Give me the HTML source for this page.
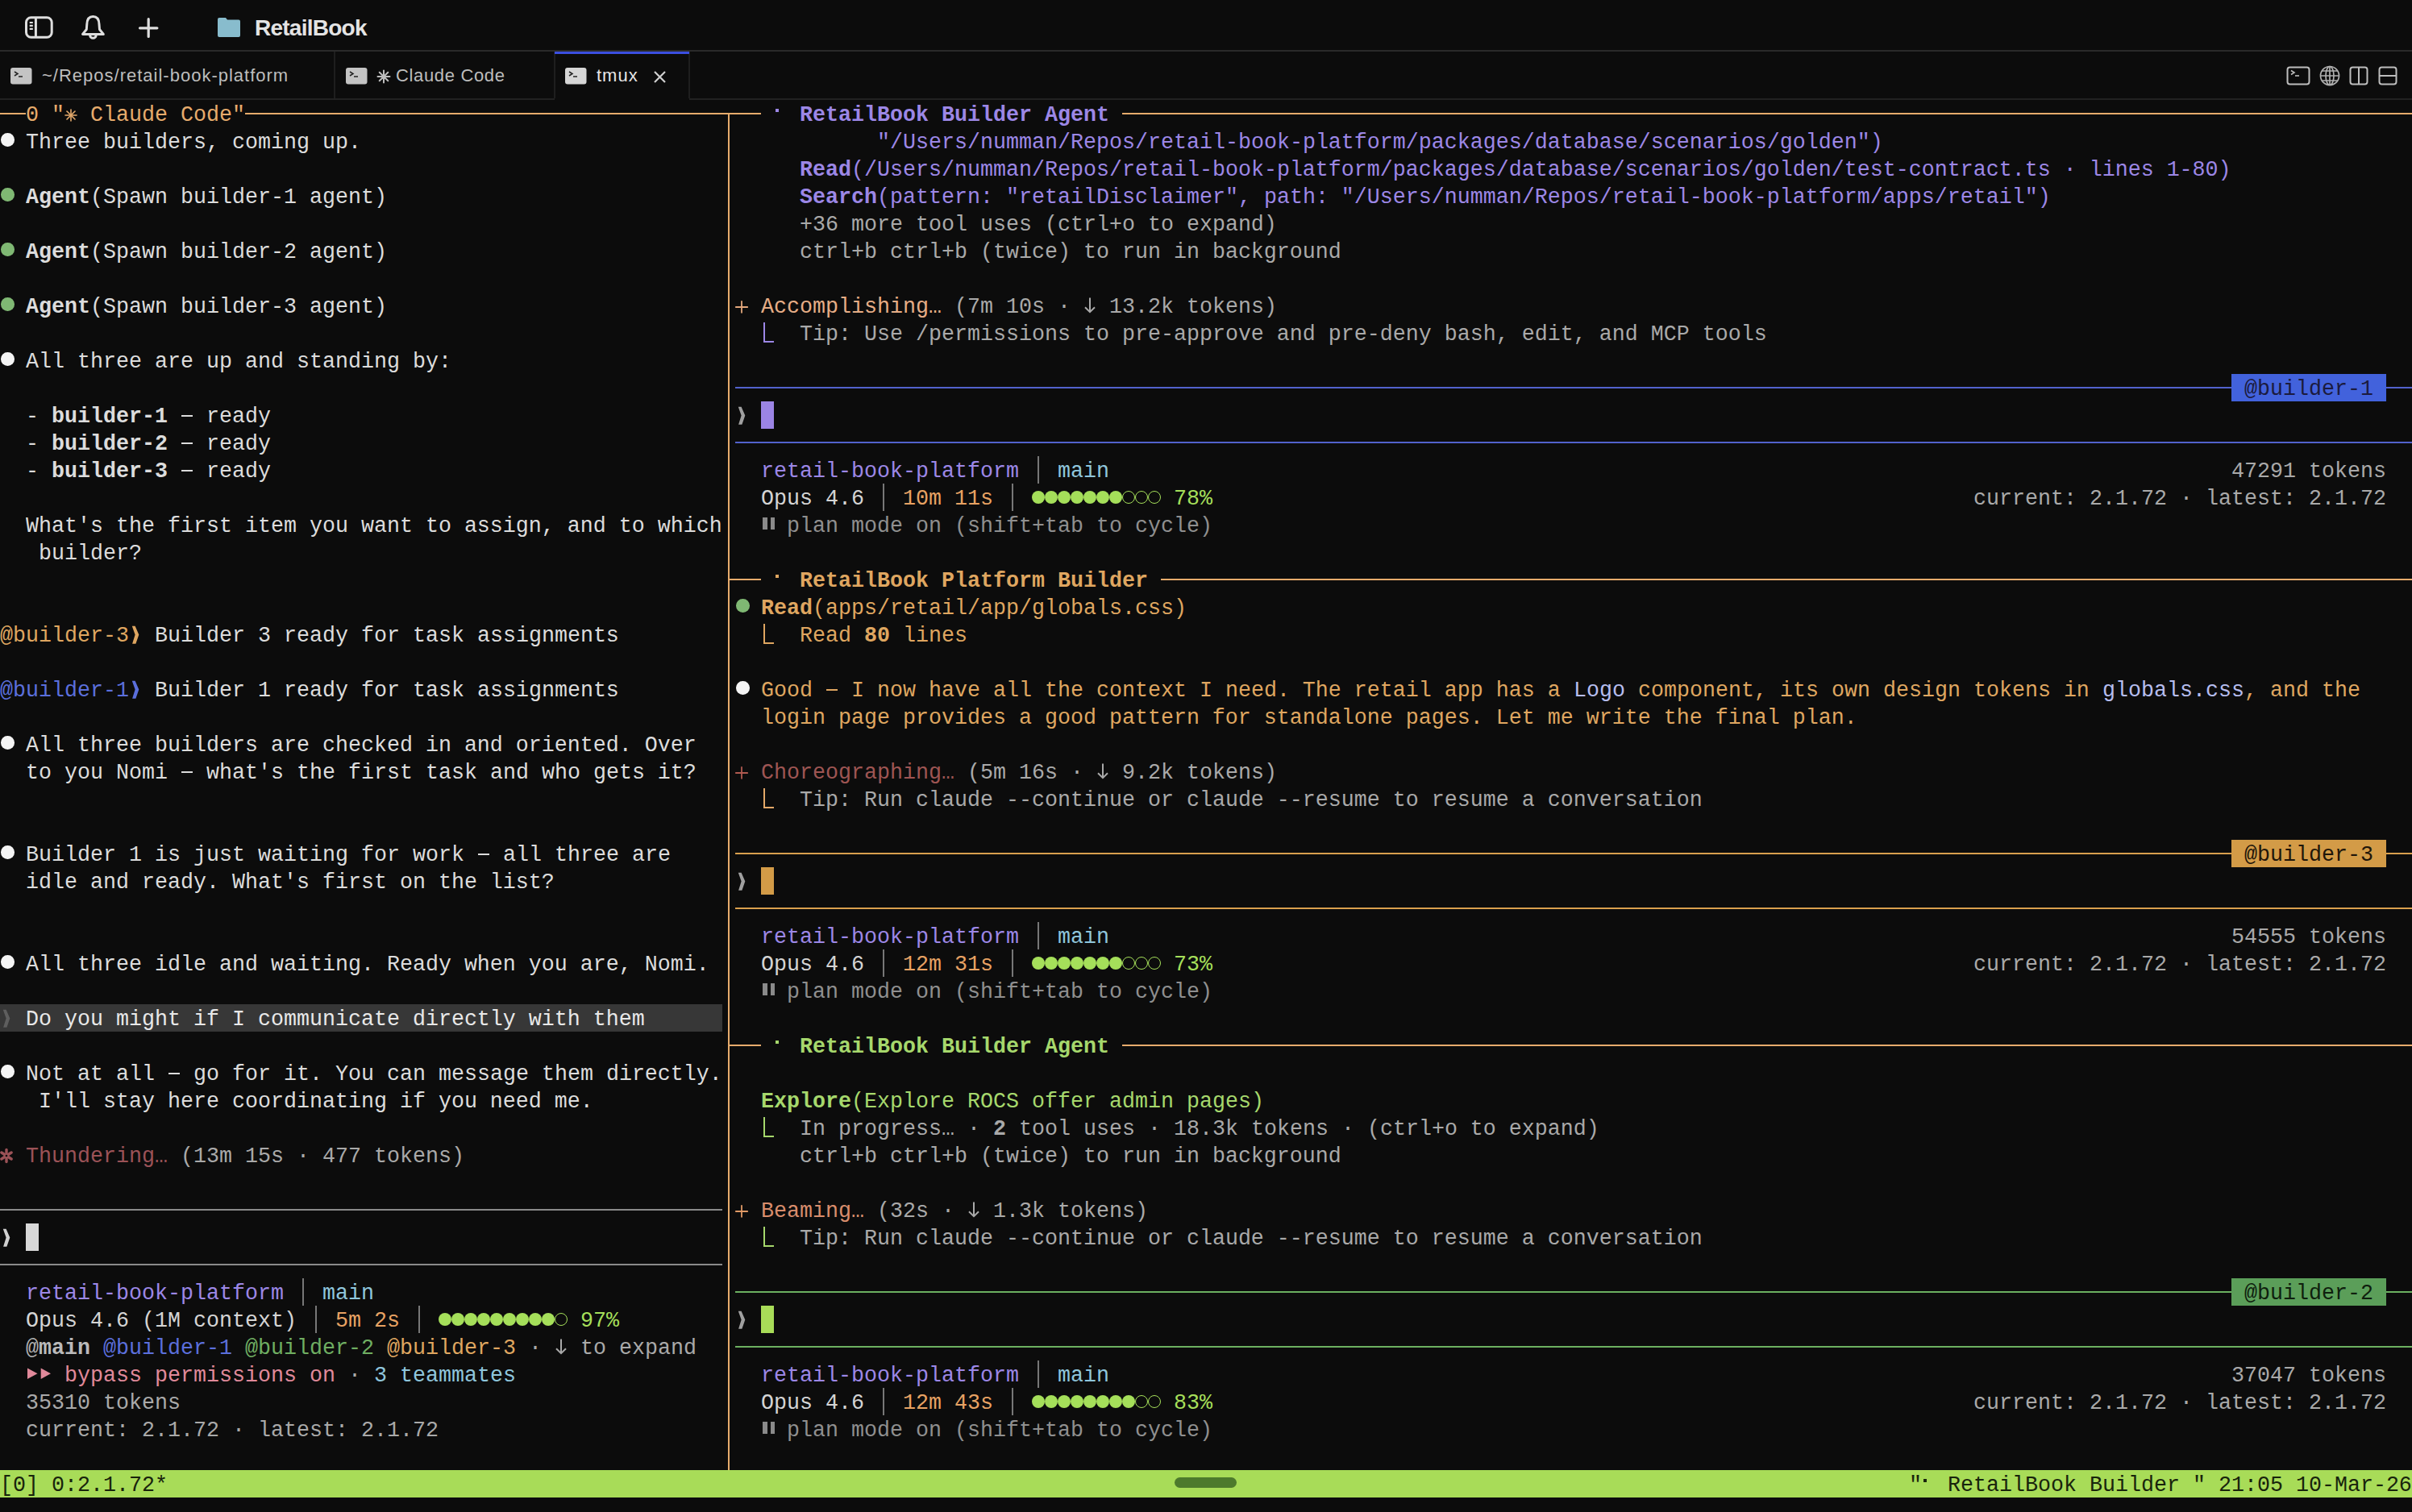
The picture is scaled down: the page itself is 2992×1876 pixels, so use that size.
<!DOCTYPE html>
<html><head><meta charset="utf-8"><style>
html,body{margin:0;padding:0;background:#0c0c0c;width:2992px;height:1876px;overflow:hidden;position:relative}
.t{position:absolute;font-family:"Liberation Mono",monospace;font-size:26.66px;line-height:34px;height:34px;white-space:pre;margin-top:2px;transform-origin:0 24px;transform:scaleY(1.07)}
.hl{position:absolute;height:2px}
.blk{position:absolute}
.ic{position:absolute;overflow:visible}
.bul{position:absolute;width:16.6px;height:16.6px;border-radius:50%}
.dot{position:absolute;width:16px;height:16px;border-radius:50%}
.hook{position:absolute;width:11px;height:23px;border-left:2px solid;border-bottom:2px solid}
.sans{position:absolute;font-family:"Liberation Sans",sans-serif;white-space:pre;line-height:1}
.b{font-weight:bold}
</style></head><body>

<div class="blk" style="left:0;top:62px;width:2992px;height:2px;background:#2a2a2a"></div>
<div class="blk" style="left:0;top:122px;width:688px;height:2px;background:#222"></div>
<div class="blk" style="left:855px;top:122px;width:2137px;height:2px;background:#222"></div>
<div class="blk" style="left:414px;top:64px;width:2px;height:58px;background:#1e1e1e"></div>
<div class="blk" style="left:687px;top:64px;width:2px;height:58px;background:#1e1e1e"></div>
<div class="blk" style="left:854px;top:64px;width:2px;height:58px;background:#1e1e1e"></div>
<div class="blk" style="left:688px;top:64px;width:167px;height:3px;background:#3b4fe0"></div>

<svg class="ic" style="left:28px;top:18px" width="40" height="32"><rect x="4.5" y="3.7" width="31.7" height="24.6" rx="6" fill="none" stroke="#dedede" stroke-width="3"/><path d="M16.4 3.7 V28.3" stroke="#dedede" stroke-width="3"/><path d="M8.7 10 H12.8 M8.7 13.9 H12.8 M8.7 17.8 H12.8" stroke="#dedede" stroke-width="2.2"/></svg>
<svg class="ic" style="left:98px;top:17px" width="36" height="36"><path d="M17.4 3.5 C12.5 3.5 10 7.5 9.8 13 L9.3 19.5 L4.5 25.4 H30.3 L25.5 19.5 L25 13 C24.8 7.5 22.3 3.5 17.4 3.5 Z" fill="none" stroke="#dedede" stroke-width="3" stroke-linejoin="round"/><path d="M13.6 26.5 A3.8 3.8 0 0 0 21.2 26.5" fill="none" stroke="#dedede" stroke-width="3"/></svg>
<svg class="ic" style="left:170px;top:20px" width="30" height="30"><path d="M14.2 3.7 V25.5 M3.5 14.8 H24.9" stroke="#dedede" stroke-width="3.2" stroke-linecap="round"/></svg>
<svg class="ic" style="left:269px;top:21px" width="30" height="26"><path d="M1 3 Q1 1 3 1 H11 L13 3.5 H27 Q29 3.5 29 5.5 V23 Q29 25 27 25 H3 Q1 25 1 23 Z" fill="#88bccd"/></svg>
<div class="sans b" style="left:316px;top:20.5px;font-size:28px;letter-spacing:-0.75px;color:#e4e4e4">RetailBook</div>

<svg class="ic" style="left:13px;top:84px" width="27" height="21"><rect x="0" y="0" width="26.5" height="20.5" rx="3" fill="#c4c4c4"/><path d="M5 5 L9 7.5 L5 10" fill="none" stroke="#222" stroke-width="1.5"/><path d="M10 11 H15" stroke="#222" stroke-width="1.5"/></svg>
<div class="sans" style="left:52px;top:83px;font-size:22px;letter-spacing:1px;color:#bdbdbd">~/Repos/retail-book-platform</div>
<svg class="ic" style="left:429px;top:84px" width="27" height="21"><rect x="0" y="0" width="26.5" height="20.5" rx="3" fill="#c4c4c4"/><path d="M5 5 L9 7.5 L5 10" fill="none" stroke="#222" stroke-width="1.5"/><path d="M10 11 H15" stroke="#222" stroke-width="1.5"/></svg>
<svg class="ic" style="left:467px;top:86px" width="18" height="18"><g stroke="#bdbdbd" stroke-width="2" stroke-linecap="round"><path d="M9 1.5 V16.5 M1.5 9 H16.5 M3.7 3.7 L14.3 14.3 M14.3 3.7 L3.7 14.3"/></g></svg>
<div class="sans" style="left:491px;top:83px;font-size:22px;letter-spacing:0.65px;color:#bdbdbd">Claude Code</div>
<svg class="ic" style="left:701px;top:84px" width="27" height="21"><rect x="0" y="0" width="26.5" height="20.5" rx="3" fill="#d6d6d6"/><path d="M5 5 L9 7.5 L5 10" fill="none" stroke="#222" stroke-width="1.5"/><path d="M10 11 H15" stroke="#222" stroke-width="1.5"/></svg>
<div class="sans" style="left:740px;top:83px;font-size:22px;letter-spacing:1px;color:#e6e6e6">tmux</div>
<svg class="ic" style="left:810px;top:87px" width="17" height="17"><path d="M2 2 L15 15 M15 2 L2 15" stroke="#d0d0d0" stroke-width="2.2"/></svg>

<svg class="ic" style="left:2836px;top:82px" width="30" height="24"><rect x="1.5" y="1.5" width="27" height="21" rx="3" fill="none" stroke="#bdbdbd" stroke-width="2"/><path d="M6 5.5 L10 8 L6 10.5" fill="none" stroke="#bdbdbd" stroke-width="1.6"/><path d="M11 12 H16" stroke="#bdbdbd" stroke-width="1.6"/></svg>
<svg class="ic" style="left:2877px;top:81px" width="26" height="26"><g fill="none" stroke="#b0b0b0" stroke-width="1.7"><circle cx="13" cy="13" r="11.5"/><ellipse cx="13" cy="13" rx="5" ry="11.5"/><path d="M13 1.5 V24.5 M1.5 13 H24.5 M3.5 7 H22.5 M3.5 19 H22.5"/></g></svg>
<svg class="ic" style="left:2914px;top:82px" width="24" height="24"><rect x="1.5" y="1.5" width="21" height="21" rx="3" fill="none" stroke="#bdbdbd" stroke-width="2"/><path d="M12 1.5 V22.5" stroke="#bdbdbd" stroke-width="2"/></svg>
<svg class="ic" style="left:2950px;top:82px" width="24" height="24"><rect x="1.5" y="1.5" width="21" height="21" rx="3" fill="none" stroke="#bdbdbd" stroke-width="2"/><path d="M1.5 12 H22.5" stroke="#bdbdbd" stroke-width="2"/></svg>

<div class="hl" style="left:0px;top:140px;width:32px;background:#e6ab6c"></div>
<span class="t" style="left:32px;top:124px;color:#e6ab6c;">0 "</span>
<svg class="ic" style="left:80px;top:124px" width="16" height="34"><g stroke="#e6ab6c" stroke-width="1.6" stroke-linecap="round"><path d="M8 12 V26"/><path d="M1 19 H15"/><path d="M3 14 L13 24"/><path d="M13 14 L3 24"/></g></svg>
<span class="t" style="left:96px;top:124px;color:#e6ab6c;"> Claude Code"</span>
<div class="hl" style="left:304px;top:140px;width:640px;background:#e6ab6c"></div>
<div class="blk" style="left:903px;top:140px;width:2px;height:1684px;background:#e6ab6c"></div>
<div class="bul" style="left:1.3px;top:165.3px;background:#f4f4f4"></div>
<span class="t" style="left:32px;top:158px;color:#dcdcdc;">Three builders, coming up.</span>
<div class="bul" style="left:1.3px;top:233.3px;background:#7fb873"></div>
<span class="t" style="left:32px;top:226px;color:#dcdcdc;font-weight:bold;">Agent</span>
<span class="t" style="left:112px;top:226px;color:#dcdcdc;">(Spawn builder-1 agent)</span>
<div class="bul" style="left:1.3px;top:301.3px;background:#7fb873"></div>
<span class="t" style="left:32px;top:294px;color:#dcdcdc;font-weight:bold;">Agent</span>
<span class="t" style="left:112px;top:294px;color:#dcdcdc;">(Spawn builder-2 agent)</span>
<div class="bul" style="left:1.3px;top:369.3px;background:#7fb873"></div>
<span class="t" style="left:32px;top:362px;color:#dcdcdc;font-weight:bold;">Agent</span>
<span class="t" style="left:112px;top:362px;color:#dcdcdc;">(Spawn builder-3 agent)</span>
<div class="bul" style="left:1.3px;top:437.3px;background:#f4f4f4"></div>
<span class="t" style="left:32px;top:430px;color:#dcdcdc;">All three are up and standing by:</span>
<span class="t" style="left:32px;top:498px;color:#dcdcdc;">-</span>
<span class="t" style="left:64px;top:498px;color:#dcdcdc;font-weight:bold;">builder-1</span>
<div class="blk" style="left:225px;top:515px;width:14px;height:2px;background:#dcdcdc"></div>
<span class="t" style="left:256px;top:498px;color:#dcdcdc;">ready</span>
<span class="t" style="left:32px;top:532px;color:#dcdcdc;">-</span>
<span class="t" style="left:64px;top:532px;color:#dcdcdc;font-weight:bold;">builder-2</span>
<div class="blk" style="left:225px;top:549px;width:14px;height:2px;background:#dcdcdc"></div>
<span class="t" style="left:256px;top:532px;color:#dcdcdc;">ready</span>
<span class="t" style="left:32px;top:566px;color:#dcdcdc;">-</span>
<span class="t" style="left:64px;top:566px;color:#dcdcdc;font-weight:bold;">builder-3</span>
<div class="blk" style="left:225px;top:583px;width:14px;height:2px;background:#dcdcdc"></div>
<span class="t" style="left:256px;top:566px;color:#dcdcdc;">ready</span>
<span class="t" style="left:32px;top:634px;color:#dcdcdc;">What's the first item you want to assign, and to which</span>
<span class="t" style="left:48px;top:668px;color:#dcdcdc;">builder?</span>
<span class="t" style="left:0px;top:770px;color:#dfa660;">@builder-3</span>
<svg class="ic" style="left:160px;top:770px" width="16" height="34"><path d="M3.8 6.8 L7.6 6.8 L12.3 17.6 L8.4 28.8 L4.1 28.8 L7.6 17.6 Z" fill="#dfa660"/></svg>
<span class="t" style="left:192px;top:770px;color:#dcdcdc;">Builder 3 ready for task assignments</span>
<span class="t" style="left:0px;top:838px;color:#5b6fdc;">@builder-1</span>
<svg class="ic" style="left:160px;top:838px" width="16" height="34"><path d="M3.8 6.8 L7.6 6.8 L12.3 17.6 L8.4 28.8 L4.1 28.8 L7.6 17.6 Z" fill="#5b6fdc"/></svg>
<span class="t" style="left:192px;top:838px;color:#dcdcdc;">Builder 1 ready for task assignments</span>
<div class="bul" style="left:1.3px;top:913.3px;background:#f4f4f4"></div>
<span class="t" style="left:32px;top:906px;color:#dcdcdc;">All three builders are checked in and oriented. Over</span>
<span class="t" style="left:32px;top:940px;color:#dcdcdc;">to you Nomi </span>
<div class="blk" style="left:225px;top:957px;width:14px;height:2px;background:#dcdcdc"></div>
<span class="t" style="left:256px;top:940px;color:#dcdcdc;">what's the first task and who gets it?</span>
<div class="bul" style="left:1.3px;top:1049.3px;background:#f4f4f4"></div>
<span class="t" style="left:32px;top:1042px;color:#dcdcdc;">Builder 1 is just waiting for work </span>
<div class="blk" style="left:593px;top:1059px;width:14px;height:2px;background:#dcdcdc"></div>
<span class="t" style="left:624px;top:1042px;color:#dcdcdc;">all three are</span>
<span class="t" style="left:32px;top:1076px;color:#dcdcdc;">idle and ready. What's first on the list?</span>
<div class="bul" style="left:1.3px;top:1185.3px;background:#f4f4f4"></div>
<span class="t" style="left:32px;top:1178px;color:#dcdcdc;">All three idle and waiting. Ready when you are, Nomi.</span>
<div class="blk" style="left:0px;top:1246px;width:896px;height:34px;background:#373737"></div>
<svg class="ic" style="left:0px;top:1246px" width="16" height="34"><path d="M3.8 6.8 L7.6 6.8 L12.3 17.6 L8.4 28.8 L4.1 28.8 L7.6 17.6 Z" fill="#5e5e5e"/></svg>
<span class="t" style="left:32px;top:1246px;color:#e8e8e8;">Do you might if I communicate directly with them</span>
<div class="bul" style="left:1.3px;top:1321.3px;background:#f4f4f4"></div>
<span class="t" style="left:32px;top:1314px;color:#dcdcdc;">Not at all </span>
<div class="blk" style="left:209px;top:1331px;width:14px;height:2px;background:#dcdcdc"></div>
<span class="t" style="left:240px;top:1314px;color:#dcdcdc;">go for it. You can message them directly.</span>
<span class="t" style="left:48px;top:1348px;color:#dcdcdc;">I'll stay here coordinating if you need me.</span>
<svg class="ic" style="left:0px;top:1416px" width="16" height="34"><g stroke="#9b5257" stroke-width="3.4" stroke-linecap="round"><path d="M8 10.5 V25.5"/><path d="M1.9 14 L14.1 22"/><path d="M14.1 14 L1.9 22"/></g><circle cx="8" cy="18" r="1.3" fill="#0c0c0c"/></svg>
<span class="t" style="left:32px;top:1416px;color:#9b5257;">Thundering…</span>
<span class="t" style="left:224px;top:1416px;color:#a9a9a9;">(13m 15s · 477 tokens)</span>
<div class="hl" style="left:0px;top:1500px;width:896px;background:#8a8a8a"></div>
<svg class="ic" style="left:0px;top:1518px" width="16" height="34"><path d="M3.8 6.8 L7.6 6.8 L12.3 17.6 L8.4 28.8 L4.1 28.8 L7.6 17.6 Z" fill="#d0d0d0"/></svg>
<div class="blk" style="left:32px;top:1518px;width:16px;height:34px;background:#d8d8d8"></div>
<div class="hl" style="left:0px;top:1568px;width:896px;background:#8a8a8a"></div>
<span class="t" style="left:32px;top:1586px;color:#9c87e6;">retail-book-platform</span>
<div class="blk" style="left:375.2px;top:1586px;width:1.6px;height:34px;background:#777777"></div>
<span class="t" style="left:400px;top:1586px;color:#8fc6dc;">main</span>
<span class="t" style="left:32px;top:1620px;color:#d4d4d4;">Opus 4.6 (1M context)</span>
<div class="blk" style="left:391.2px;top:1620px;width:1.6px;height:34px;background:#777777"></div>
<span class="t" style="left:416px;top:1620px;color:#e7a263;">5m 2s</span>
<div class="blk" style="left:519.2px;top:1620px;width:1.6px;height:34px;background:#777777"></div>
<div class="dot" style="left:544px;top:1628.7px;background:#a5df5a"></div>
<div class="dot" style="left:560px;top:1628.7px;background:#a5df5a"></div>
<div class="dot" style="left:576px;top:1628.7px;background:#a5df5a"></div>
<div class="dot" style="left:592px;top:1628.7px;background:#a5df5a"></div>
<div class="dot" style="left:608px;top:1628.7px;background:#a5df5a"></div>
<div class="dot" style="left:624px;top:1628.7px;background:#a5df5a"></div>
<div class="dot" style="left:640px;top:1628.7px;background:#a5df5a"></div>
<div class="dot" style="left:656px;top:1628.7px;background:#a5df5a"></div>
<div class="dot" style="left:672px;top:1628.7px;background:#a5df5a"></div>
<div class="dot" style="left:688px;top:1628.7px;border:1.6px solid #a5df5a;box-sizing:border-box"></div>
<span class="t" style="left:720px;top:1620px;color:#a5df5a;">97%</span>
<span class="t" style="left:32px;top:1654px;color:#b0b0b0;">@</span>
<span class="t" style="left:48px;top:1654px;color:#bababa;font-weight:bold;">main</span>
<span class="t" style="left:128px;top:1654px;color:#5b6fdc;">@builder-1</span>
<span class="t" style="left:304px;top:1654px;color:#6fae62;">@builder-2</span>
<span class="t" style="left:480px;top:1654px;color:#dfa660;">@builder-3</span>
<svg class="ic" style="left:688px;top:1654px" width="16" height="34"><path d="M8 7.5 V25" stroke="#a9a9a9" stroke-width="2" fill="none"/><path d="M2 19.2 L8 25.2 L14 19.2" stroke="#a9a9a9" stroke-width="2" fill="none" stroke-linejoin="miter"/></svg>
<span class="t" style="left:656px;top:1654px;color:#a9a9a9;">·   to expand</span>
<svg class="ic" style="left:32px;top:1688px" width="32" height="34"><path d="M2 9.5 L14.5 16.2 L2 23 Z M18.7 9.5 L31 16.2 L18.7 23 Z" fill="#e0899a"/></svg>
<span class="t" style="left:80px;top:1688px;color:#e0899a;">bypass permissions on</span>
<span class="t" style="left:432px;top:1688px;color:#a9a9a9;">·</span>
<span class="t" style="left:464px;top:1688px;color:#8fc6dc;">3 teammates</span>
<span class="t" style="left:32px;top:1722px;color:#a9a9a9;">35310 tokens</span>
<span class="t" style="left:32px;top:1756px;color:#a9a9a9;">current: 2.1.72 · latest: 2.1.72</span>
<div class="hl" style="left:904px;top:140px;width:40px;background:#e6ab6c"></div>
<div class="blk" style="left:961.7px;top:134.8px;width:4.7px;height:4.2px;background:#9c87e6"></div>
<span class="t" style="left:992px;top:124px;color:#9c87e6;font-weight:bold;">RetailBook Builder Agent</span>
<div class="hl" style="left:1392px;top:140px;width:1600px;background:#e6ab6c"></div>
<span class="t" style="left:1088px;top:158px;color:#9c87e6;">"/Users/numman/Repos/retail-book-platform/packages/database/scenarios/golden")</span>
<span class="t" style="left:992px;top:192px;color:#9c87e6;font-weight:bold;">Read</span>
<span class="t" style="left:1056px;top:192px;color:#9c87e6;">(/Users/numman/Repos/retail-book-platform/packages/database/scenarios/golden/test-contract.ts · lines 1-80)</span>
<span class="t" style="left:992px;top:226px;color:#9c87e6;font-weight:bold;">Search</span>
<span class="t" style="left:1088px;top:226px;color:#9c87e6;">(pattern: "retailDisclaimer", path: "/Users/numman/Repos/retail-book-platform/apps/retail")</span>
<span class="t" style="left:992px;top:260px;color:#a9a9a9;">+36 more tool uses (ctrl+o to expand)</span>
<span class="t" style="left:992px;top:294px;color:#a9a9a9;">ctrl+b ctrl+b (twice) to run in background</span>
<svg class="ic" style="left:912px;top:362px" width="16" height="34"><g stroke="#e3a77c" stroke-width="1.8" stroke-linecap="round"><path d="M8 11.8 V25.8"/><path d="M0.8 19 H15.2"/></g></svg>
<span class="t" style="left:944px;top:362px;color:#e6ad86;">Accomplishing…</span>
<svg class="ic" style="left:1344px;top:362px" width="16" height="34"><path d="M8 7.5 V25" stroke="#a9a9a9" stroke-width="2" fill="none"/><path d="M2 19.2 L8 25.2 L14 19.2" stroke="#a9a9a9" stroke-width="2" fill="none" stroke-linejoin="miter"/></svg>
<span class="t" style="left:1184px;top:362px;color:#a9a9a9;">(7m 10s ·   13.2k tokens)</span>
<div class="hook" style="left:947px;top:400px;border-color:#9c87e6"></div>
<span class="t" style="left:992px;top:396px;color:#a9a9a9;">Tip: Use /permissions to pre-approve and pre-deny bash, edit, and MCP tools</span>
<div class="hl" style="left:912px;top:480px;width:1856px;background:#5262cc"></div>
<div class="blk" style="left:2768px;top:464px;width:192px;height:34px;background:#4262dc"></div>
<span class="t" style="left:2784px;top:464px;color:#1b1b3e;">@builder-1</span>
<div class="hl" style="left:2960px;top:480px;width:32px;background:#5262cc"></div>
<svg class="ic" style="left:912px;top:498px" width="16" height="34"><path d="M3.8 6.8 L7.6 6.8 L12.3 17.6 L8.4 28.8 L4.1 28.8 L7.6 17.6 Z" fill="#a0a0a0"/></svg>
<div class="blk" style="left:944px;top:498px;width:16px;height:34px;background:#9b84e4"></div>
<div class="hl" style="left:912px;top:548px;width:2080px;background:#5262cc"></div>
<span class="t" style="left:944px;top:566px;color:#9c87e6;">retail-book-platform</span>
<div class="blk" style="left:1287.2px;top:566px;width:1.6px;height:34px;background:#777777"></div>
<span class="t" style="left:1312px;top:566px;color:#8fc6dc;">main</span>
<span class="t" style="left:2768px;top:566px;color:#a9a9a9;">47291 tokens</span>
<span class="t" style="left:944px;top:600px;color:#d4d4d4;">Opus 4.6</span>
<div class="blk" style="left:1095.2px;top:600px;width:1.6px;height:34px;background:#777777"></div>
<span class="t" style="left:1120px;top:600px;color:#e7a263;">10m 11s</span>
<div class="blk" style="left:1255.2px;top:600px;width:1.6px;height:34px;background:#777777"></div>
<div class="dot" style="left:1280px;top:608.7px;background:#a5df5a"></div>
<div class="dot" style="left:1296px;top:608.7px;background:#a5df5a"></div>
<div class="dot" style="left:1312px;top:608.7px;background:#a5df5a"></div>
<div class="dot" style="left:1328px;top:608.7px;background:#a5df5a"></div>
<div class="dot" style="left:1344px;top:608.7px;background:#a5df5a"></div>
<div class="dot" style="left:1360px;top:608.7px;background:#a5df5a"></div>
<div class="dot" style="left:1376px;top:608.7px;background:#a5df5a"></div>
<div class="dot" style="left:1392px;top:608.7px;border:1.6px solid #a5df5a;box-sizing:border-box"></div>
<div class="dot" style="left:1408px;top:608.7px;border:1.6px solid #a5df5a;box-sizing:border-box"></div>
<div class="dot" style="left:1424px;top:608.7px;border:1.6px solid #a5df5a;box-sizing:border-box"></div>
<span class="t" style="left:1456px;top:600px;color:#a5df5a;">78%</span>
<span class="t" style="left:2448px;top:600px;color:#a9a9a9;">current: 2.1.72 · latest: 2.1.72</span>
<div class="blk" style="left:946px;top:642px;width:5.5px;height:15px;background:#8a8a8a"></div>
<div class="blk" style="left:955.5px;top:642px;width:5.5px;height:15px;background:#8a8a8a"></div>
<span class="t" style="left:976px;top:634px;color:#8f8f8f;">plan mode on (shift+tab to cycle)</span>
<div class="hl" style="left:904px;top:718px;width:40px;background:#e6ab6c"></div>
<div class="blk" style="left:961.7px;top:712.8px;width:4.7px;height:4.2px;background:#dfa660"></div>
<span class="t" style="left:992px;top:702px;color:#dfa660;font-weight:bold;">RetailBook Platform Builder</span>
<div class="hl" style="left:1440px;top:718px;width:1552px;background:#e6ab6c"></div>
<div class="bul" style="left:913.3px;top:743.3px;background:#7fb873"></div>
<span class="t" style="left:944px;top:736px;color:#dfa660;font-weight:bold;">Read</span>
<span class="t" style="left:1008px;top:736px;color:#dfa660;">(apps/retail/app/globals.css)</span>
<div class="hook" style="left:947px;top:774px;border-color:#dfa660"></div>
<span class="t" style="left:992px;top:770px;color:#dfa660;">Read </span>
<span class="t" style="left:1072px;top:770px;color:#dfa660;font-weight:bold;">80</span>
<span class="t" style="left:1120px;top:770px;color:#dfa660;">lines</span>
<div class="bul" style="left:913.3px;top:845.3px;background:#f4f4f4"></div>
<span class="t" style="left:944px;top:838px;color:#dfa660;">Good </span>
<div class="blk" style="left:1025px;top:855px;width:14px;height:2px;background:#dfa660"></div>
<span class="t" style="left:1056px;top:838px;color:#dfa660;">I now have all the context I need. The retail app has a </span>
<span class="t" style="left:1952px;top:838px;color:#b6bdee;">Logo</span>
<span class="t" style="left:2016px;top:838px;color:#dfa660;"> component, its own design tokens in </span>
<span class="t" style="left:2608px;top:838px;color:#b6bdee;">globals.css</span>
<span class="t" style="left:2784px;top:838px;color:#dfa660;">, and the</span>
<span class="t" style="left:944px;top:872px;color:#dfa660;">login page provides a good pattern for standalone pages. Let me write the final plan.</span>
<svg class="ic" style="left:912px;top:940px" width="16" height="34"><g stroke="#b05a50" stroke-width="1.8" stroke-linecap="round"><path d="M8 11.8 V25.8"/><path d="M0.8 19 H15.2"/></g></svg>
<span class="t" style="left:944px;top:940px;color:#9e5553;">Choreographing…</span>
<svg class="ic" style="left:1360px;top:940px" width="16" height="34"><path d="M8 7.5 V25" stroke="#a9a9a9" stroke-width="2" fill="none"/><path d="M2 19.2 L8 25.2 L14 19.2" stroke="#a9a9a9" stroke-width="2" fill="none" stroke-linejoin="miter"/></svg>
<span class="t" style="left:1200px;top:940px;color:#a9a9a9;">(5m 16s ·   9.2k tokens)</span>
<div class="hook" style="left:947px;top:978px;border-color:#e3a868"></div>
<span class="t" style="left:992px;top:974px;color:#a9a9a9;">Tip: Run claude --continue or claude --resume to resume a conversation</span>
<div class="hl" style="left:912px;top:1058px;width:1856px;background:#d9a04e"></div>
<div class="blk" style="left:2768px;top:1042px;width:192px;height:34px;background:#d39b47"></div>
<span class="t" style="left:2784px;top:1042px;color:#1f160a;">@builder-3</span>
<div class="hl" style="left:2960px;top:1058px;width:32px;background:#d9a04e"></div>
<svg class="ic" style="left:912px;top:1076px" width="16" height="34"><path d="M3.8 6.8 L7.6 6.8 L12.3 17.6 L8.4 28.8 L4.1 28.8 L7.6 17.6 Z" fill="#a0a0a0"/></svg>
<div class="blk" style="left:944px;top:1076px;width:16px;height:34px;background:#d39b47"></div>
<div class="hl" style="left:912px;top:1126px;width:2080px;background:#d9a04e"></div>
<span class="t" style="left:944px;top:1144px;color:#9c87e6;">retail-book-platform</span>
<div class="blk" style="left:1287.2px;top:1144px;width:1.6px;height:34px;background:#777777"></div>
<span class="t" style="left:1312px;top:1144px;color:#8fc6dc;">main</span>
<span class="t" style="left:2768px;top:1144px;color:#a9a9a9;">54555 tokens</span>
<span class="t" style="left:944px;top:1178px;color:#d4d4d4;">Opus 4.6</span>
<div class="blk" style="left:1095.2px;top:1178px;width:1.6px;height:34px;background:#777777"></div>
<span class="t" style="left:1120px;top:1178px;color:#e7a263;">12m 31s</span>
<div class="blk" style="left:1255.2px;top:1178px;width:1.6px;height:34px;background:#777777"></div>
<div class="dot" style="left:1280px;top:1186.7px;background:#a5df5a"></div>
<div class="dot" style="left:1296px;top:1186.7px;background:#a5df5a"></div>
<div class="dot" style="left:1312px;top:1186.7px;background:#a5df5a"></div>
<div class="dot" style="left:1328px;top:1186.7px;background:#a5df5a"></div>
<div class="dot" style="left:1344px;top:1186.7px;background:#a5df5a"></div>
<div class="dot" style="left:1360px;top:1186.7px;background:#a5df5a"></div>
<div class="dot" style="left:1376px;top:1186.7px;background:#a5df5a"></div>
<div class="dot" style="left:1392px;top:1186.7px;border:1.6px solid #a5df5a;box-sizing:border-box"></div>
<div class="dot" style="left:1408px;top:1186.7px;border:1.6px solid #a5df5a;box-sizing:border-box"></div>
<div class="dot" style="left:1424px;top:1186.7px;border:1.6px solid #a5df5a;box-sizing:border-box"></div>
<span class="t" style="left:1456px;top:1178px;color:#a5df5a;">73%</span>
<span class="t" style="left:2448px;top:1178px;color:#a9a9a9;">current: 2.1.72 · latest: 2.1.72</span>
<div class="blk" style="left:946px;top:1220px;width:5.5px;height:15px;background:#8a8a8a"></div>
<div class="blk" style="left:955.5px;top:1220px;width:5.5px;height:15px;background:#8a8a8a"></div>
<span class="t" style="left:976px;top:1212px;color:#8f8f8f;">plan mode on (shift+tab to cycle)</span>
<div class="hl" style="left:904px;top:1296px;width:40px;background:#e6ab6c"></div>
<div class="blk" style="left:961.7px;top:1290.8px;width:4.7px;height:4.2px;background:#a6d86c"></div>
<span class="t" style="left:992px;top:1280px;color:#a6d86c;font-weight:bold;">RetailBook Builder Agent</span>
<div class="hl" style="left:1392px;top:1296px;width:1600px;background:#e6ab6c"></div>
<span class="t" style="left:944px;top:1348px;color:#a6d86c;font-weight:bold;">Explore</span>
<span class="t" style="left:1056px;top:1348px;color:#a6d86c;">(Explore ROCS offer admin pages)</span>
<div class="hook" style="left:947px;top:1386px;border-color:#a6d86c"></div>
<span class="t" style="left:992px;top:1382px;color:#a9a9a9;">In progress… · </span>
<span class="t" style="left:1232px;top:1382px;color:#a9a9a9;font-weight:bold;">2</span>
<span class="t" style="left:1248px;top:1382px;color:#a9a9a9;"> tool uses · 18.3k tokens · (ctrl+o to expand)</span>
<span class="t" style="left:992px;top:1416px;color:#a9a9a9;">ctrl+b ctrl+b (twice) to run in background</span>
<svg class="ic" style="left:912px;top:1484px" width="16" height="34"><g stroke="#e09a66" stroke-width="1.8" stroke-linecap="round"><path d="M8 11.8 V25.8"/><path d="M0.8 19 H15.2"/></g></svg>
<span class="t" style="left:944px;top:1484px;color:#d98d6c;">Beaming…</span>
<svg class="ic" style="left:1200px;top:1484px" width="16" height="34"><path d="M8 7.5 V25" stroke="#a9a9a9" stroke-width="2" fill="none"/><path d="M2 19.2 L8 25.2 L14 19.2" stroke="#a9a9a9" stroke-width="2" fill="none" stroke-linejoin="miter"/></svg>
<span class="t" style="left:1088px;top:1484px;color:#a9a9a9;">(32s ·   1.3k tokens)</span>
<div class="hook" style="left:947px;top:1522px;border-color:#a6d86c"></div>
<span class="t" style="left:992px;top:1518px;color:#a9a9a9;">Tip: Run claude --continue or claude --resume to resume a conversation</span>
<div class="hl" style="left:912px;top:1602px;width:1856px;background:#6cb060"></div>
<div class="blk" style="left:2768px;top:1586px;width:192px;height:34px;background:#5b9e59"></div>
<span class="t" style="left:2784px;top:1586px;color:#0f1f0e;">@builder-2</span>
<div class="hl" style="left:2960px;top:1602px;width:32px;background:#6cb060"></div>
<svg class="ic" style="left:912px;top:1620px" width="16" height="34"><path d="M3.8 6.8 L7.6 6.8 L12.3 17.6 L8.4 28.8 L4.1 28.8 L7.6 17.6 Z" fill="#a0a0a0"/></svg>
<div class="blk" style="left:944px;top:1620px;width:16px;height:34px;background:#a8dc58"></div>
<div class="hl" style="left:912px;top:1670px;width:2080px;background:#6cb060"></div>
<span class="t" style="left:944px;top:1688px;color:#9c87e6;">retail-book-platform</span>
<div class="blk" style="left:1287.2px;top:1688px;width:1.6px;height:34px;background:#777777"></div>
<span class="t" style="left:1312px;top:1688px;color:#8fc6dc;">main</span>
<span class="t" style="left:2768px;top:1688px;color:#a9a9a9;">37047 tokens</span>
<span class="t" style="left:944px;top:1722px;color:#d4d4d4;">Opus 4.6</span>
<div class="blk" style="left:1095.2px;top:1722px;width:1.6px;height:34px;background:#777777"></div>
<span class="t" style="left:1120px;top:1722px;color:#e7a263;">12m 43s</span>
<div class="blk" style="left:1255.2px;top:1722px;width:1.6px;height:34px;background:#777777"></div>
<div class="dot" style="left:1280px;top:1730.7px;background:#a5df5a"></div>
<div class="dot" style="left:1296px;top:1730.7px;background:#a5df5a"></div>
<div class="dot" style="left:1312px;top:1730.7px;background:#a5df5a"></div>
<div class="dot" style="left:1328px;top:1730.7px;background:#a5df5a"></div>
<div class="dot" style="left:1344px;top:1730.7px;background:#a5df5a"></div>
<div class="dot" style="left:1360px;top:1730.7px;background:#a5df5a"></div>
<div class="dot" style="left:1376px;top:1730.7px;background:#a5df5a"></div>
<div class="dot" style="left:1392px;top:1730.7px;background:#a5df5a"></div>
<div class="dot" style="left:1408px;top:1730.7px;border:1.6px solid #a5df5a;box-sizing:border-box"></div>
<div class="dot" style="left:1424px;top:1730.7px;border:1.6px solid #a5df5a;box-sizing:border-box"></div>
<span class="t" style="left:1456px;top:1722px;color:#a5df5a;">83%</span>
<span class="t" style="left:2448px;top:1722px;color:#a9a9a9;">current: 2.1.72 · latest: 2.1.72</span>
<div class="blk" style="left:946px;top:1764px;width:5.5px;height:15px;background:#8a8a8a"></div>
<div class="blk" style="left:955.5px;top:1764px;width:5.5px;height:15px;background:#8a8a8a"></div>
<span class="t" style="left:976px;top:1756px;color:#8f8f8f;">plan mode on (shift+tab to cycle)</span>
<div class="blk" style="left:0;top:1824px;width:2992px;height:34px;background:#a8dc58"></div>
<span class="t" style="left:0px;top:1824px;color:#18240c;">[0] 0:2.1.72*</span>
<span class="t" style="left:2368px;top:1824px;color:#18240c;">"</span>
<div class="blk" style="left:2385.7px;top:1834.8px;width:4.7px;height:4.2px;background:#18240c"></div>
<span class="t" style="left:2416px;top:1824px;color:#18240c;">RetailBook Builder " 21:05 10-Mar-26</span>
<div class="blk" style="left:1457px;top:1833px;width:77px;height:13px;border-radius:7px;background:#4d7a2c"></div>
</body></html>
